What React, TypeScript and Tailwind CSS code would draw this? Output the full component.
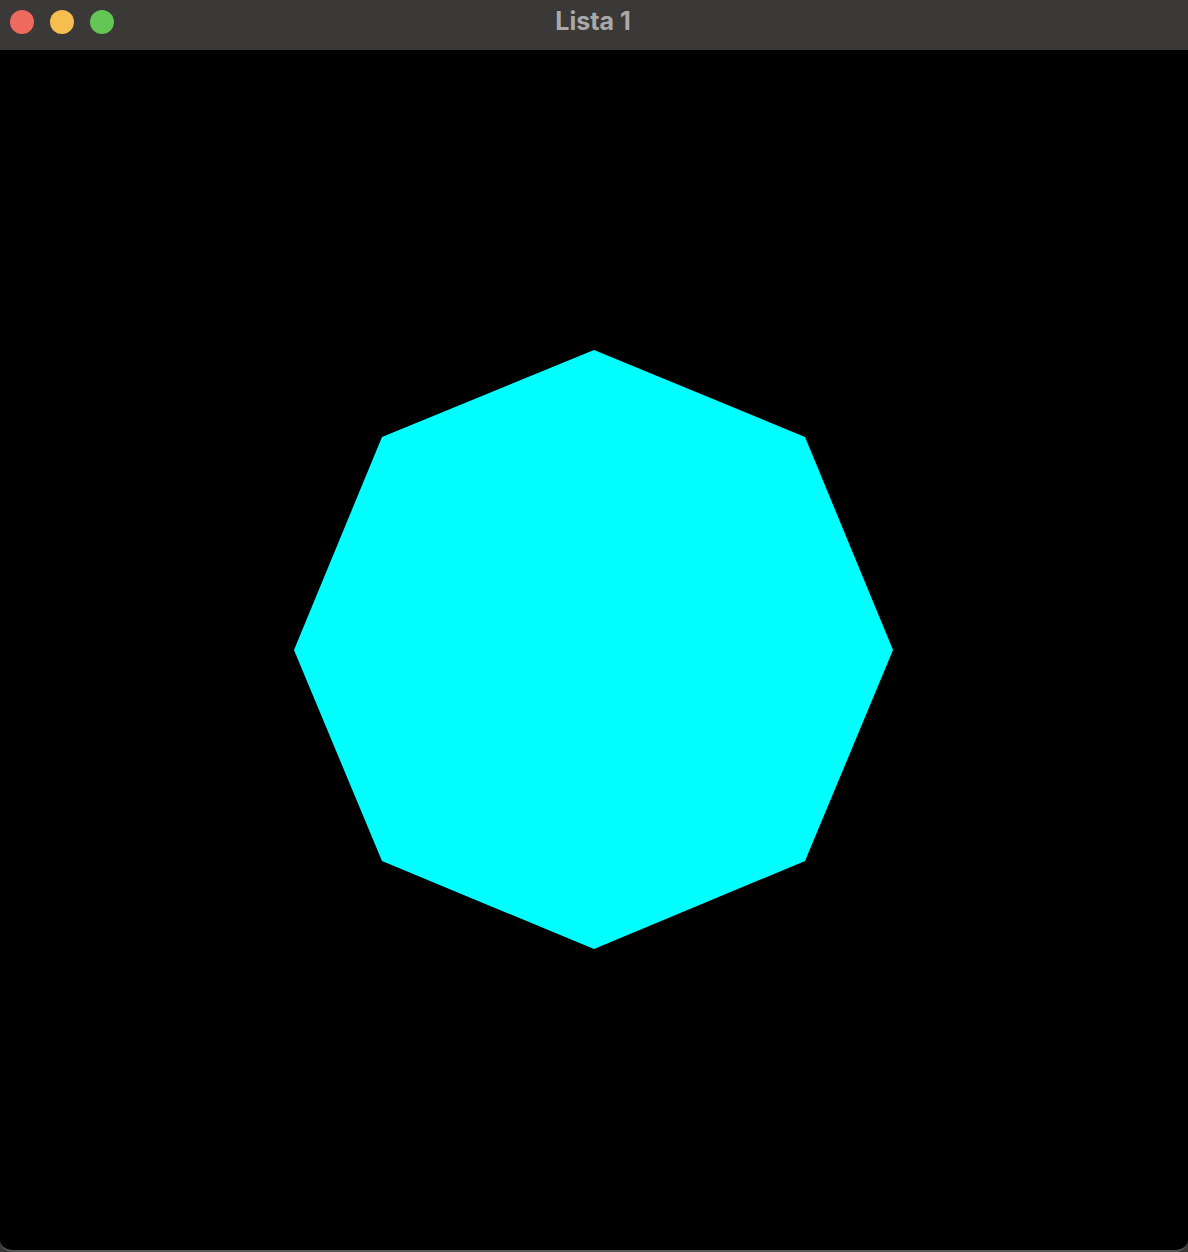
export default function App() {
  // octagon vertices in content-area coords (title bar is 50px tall)
  const pts = [
    [594, 300], [805, 387], [893, 600], [805, 811],
    [594, 899], [382, 811], [294, 600], [382, 387],
  ];

  return (
    <div className="w-[1188px] h-[1252px] bg-[#3a3937] flex flex-col overflow-hidden">
      <div className="h-[50px] shrink-0 relative flex items-center justify-center">
        <div className="absolute left-[10px] top-[10px] flex gap-[16px]">
          <span className="w-[24px] h-[24px] rounded-full bg-[#ee6a5f]" />
          <span className="w-[24px] h-[24px] rounded-full bg-[#f5be4f]" />
          <span className="w-[24px] h-[24px] rounded-full bg-[#62c554]" />
        </div>
        <span className="text-[25px] leading-none font-bold text-[#a9a9a9] font-['Inter',sans-serif] -mt-[8px] ml-[-2px]">
          Lista 1
        </span>
      </div>
      <div className="flex-1 bg-black rounded-b-[12px] border-b-[2px] border-[#555555]">
        <svg width="1188" height="1200" viewBox="0 0 1188 1200" className="block">
          <polygon points={pts.map((p) => p.join(',')).join(' ')} fill="#00ffff" />
        </svg>
      </div>
    </div>
  );
}
